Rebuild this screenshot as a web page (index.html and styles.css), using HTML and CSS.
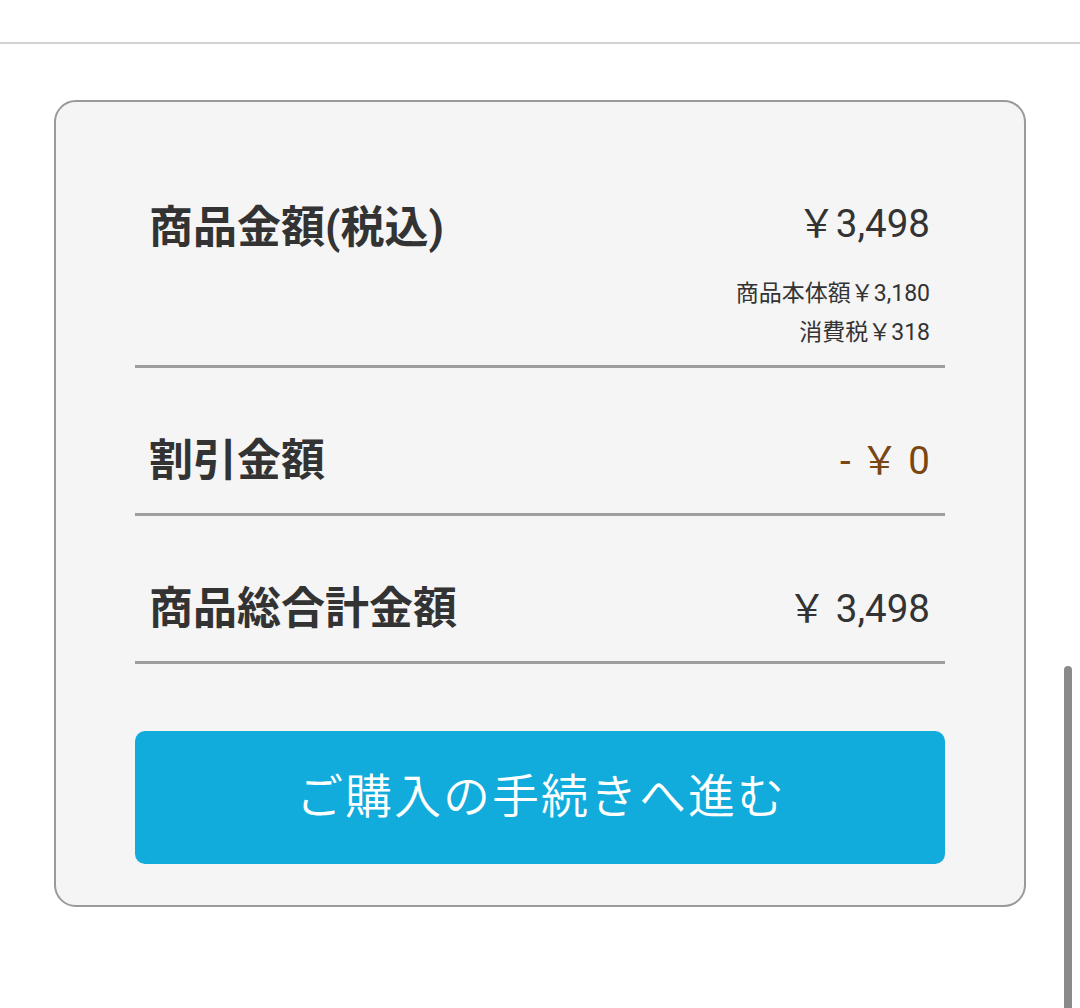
FILE: index.html
```html
<!DOCTYPE html>
<html lang="ja">
<head>
<meta charset="utf-8">
<title>カート</title>
<link rel="stylesheet" href="styles.css">
</head>
<body>
<div class="topbar"></div>
<main class="page">
  <section class="summary">
    <div class="row row-first">
      <div class="label">商品金額(税込)</div>
      <div class="amounts">
        <div class="value">￥3,498</div>
        <div class="sub">商品本体額￥3,180</div>
        <div class="sub">消費税￥318</div>
      </div>
    </div>
    <div class="row">
      <div class="label">割引金額</div>
      <div class="value discount">- ￥ 0</div>
    </div>
    <div class="row">
      <div class="label">商品総合計金額</div>
      <div class="value">￥ 3,498</div>
    </div>
    <button class="checkout" type="button">ご購入の手続きへ進む</button>
  </section>
</main>
<div class="scrollbar"></div>
</body>
</html>
```
FILE: styles.css
```css
html, body {
  margin: 0;
  padding: 0;
  background: #ffffff;
}
body {
  font-family: "Roboto", "Noto Sans CJK JP", sans-serif;
  color: #333333;
  width: 1080px;
  height: 1008px;
  overflow: hidden;
  position: relative;
}
.topbar {
  height: 42px;
  border-bottom: 2px solid #d2d2d2;
}
.page {
  padding: 56px 54px 0 54px;
}
.summary {
  background: #f5f5f5;
  border: 2px solid #9a9a9a;
  border-radius: 22px;
  padding: 33px 79px 41px 79px;
  display: flex;
  flex-direction: column;
}
.row {
  display: flex;
  justify-content: space-between;
  align-items: center;
  padding: 61px 15px 20px 14px;
  border-bottom: 3px solid #9e9e9e;
}
.row-first {
  align-items: flex-start;
  padding-bottom: 13px;
}
.label {
  font-family: "Roboto", "Noto Sans CJK JP", sans-serif;
  font-weight: 700;
  font-size: 44px;
  line-height: 64px;
  color: #333333;
}
.amounts {
  display: flex;
  flex-direction: column;
  align-items: flex-end;
}
.value {
  font-size: 38.5px;
  line-height: 56px;
  color: #333333;
  white-space: pre;
}
.row-first .value {
  margin-bottom: 22px;
}
.sub {
  font-size: 23px;
  line-height: 39px;
  color: #333333;
}
.discount {
  color: #7a4612;
}
.checkout {
  margin-top: 67px;
  height: 133px;
  border: none;
  border-radius: 10px;
  background: #12acdc;
  color: #ffffff;
  font-family: "Noto Sans CJK JP", sans-serif;
  font-weight: 350;
  font-size: 47px;
  letter-spacing: 2px;
  padding: 0 0 10px 2px;
  cursor: pointer;
}
.scrollbar {
  position: absolute;
  right: 8px;
  top: 666px;
  width: 8px;
  height: 360px;
  border-radius: 4px;
  background: #8a8a8a;
}
```
